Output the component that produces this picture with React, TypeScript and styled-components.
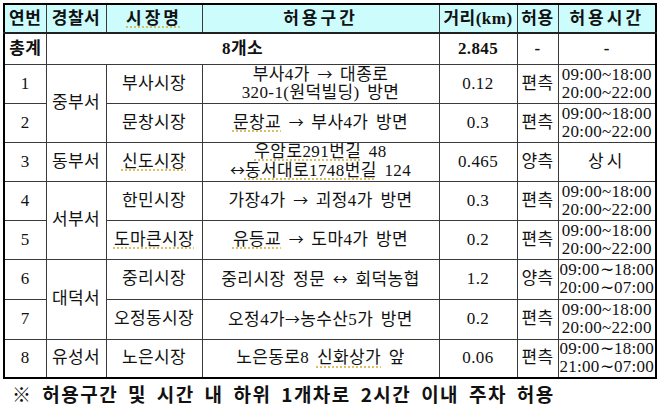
import * as React from 'react';
import styled, { createGlobalStyle } from 'styled-components';

const GlobalStyle = createGlobalStyle`
  html, body {
    margin: 0;
    padding: 0;
    background: #fff;
  }
  body {
    font-family: "Liberation Serif", "Noto Sans CJK KR", serif;
    color: #111;
  }
`;

const Page = styled.div`
  width: 658px;
  height: 406px;
  padding: 3px 3px 0 3px;
  box-sizing: border-box;
  overflow: hidden;
`;
const Table = styled.table`
  width: 652px;
  table-layout: fixed;
  border-collapse: collapse;
  border: 2px solid #000;
`;
const Col = styled.col<{ w: number }>`
  width: ${(p) => p.w}px;
`;
const Row = styled.tr<{ h: number }>`
  height: ${(p) => p.h}px;
`;
const Cell = styled.td`
  border: 1px solid #3a3a3a;
  padding: 0;
  text-align: center;
  vertical-align: middle;
  font-size: 17px;
  line-height: 18px;
  letter-spacing: 0.4px;
  word-spacing: 3px;
  white-space: nowrap;
  overflow: hidden;
`;
const HeadCell = styled(Cell).attrs({ as: 'th' })<{ wide?: boolean }>`
  background: #ccfcfc;
  font-weight: 700;
  font-size: 17px;
  letter-spacing: ${(p) => (p.wide ? '3px' : '0.5px')};
  border-bottom: 2px solid #222;
`;
const TotalCell = styled(Cell)`
  font-weight: 700;
`;
const TimeCell = styled(Cell)`
  font-size: 17px;
  letter-spacing: 0.3px;
  line-height: 18px;
`;
const TimeLine = styled.div`
  white-space: nowrap;
`;
const Always = styled.span`
  letter-spacing: 3px;
`;
const Sym = styled.span`
  font-family: "Noto Sans CJK KR", sans-serif;
  font-size: 15px;
  letter-spacing: 0;
`;
const SpellMark = styled.span`
  text-decoration: underline dotted #d9b44a;
  text-underline-offset: 3px;
`;
const Note = styled.div`
  padding: 5px 0 0 9px;
  font-family: "Noto Sans CJK KR", sans-serif;
  font-weight: 700;
  font-size: 19px;
  line-height: 20px;
  letter-spacing: 1.5px;
  word-spacing: 4px;
  white-space: nowrap;
`;

type RowData = {
    no: string;
    station?: { name: string; span: number };
    market: React.ReactNode;
    section: React.ReactNode;
    dist: string;
    side: string;
    time: React.ReactNode;
    height: number;
};

const times = (a: string, b: string) => (
    <>
        <TimeLine>{a}</TimeLine>
        <TimeLine>{b}</TimeLine>
    </>
);

const rows: RowData[] = [
    {
        no: '1',
        station: { name: '중부서', span: 2 },
        market: '부사시장',
        section: (
            <>
                <div>부사4가 <Sym>→</Sym> 대종로</div>
                <div>320-1(원덕빌딩) 방면</div>
            </>
        ),
        dist: '0.12',
        side: '편측',
        time: times('09:00~18:00', '20:00~22:00'),
        height: 39,
    },
    {
        no: '2',
        market: '문창시장',
        section: <><SpellMark>문창교</SpellMark> <Sym>→</Sym> 부사4가 방면</>,
        dist: '0.3',
        side: '편측',
        time: times('09:00~18:00', '20:00~22:00'),
        height: 39,
    },
    {
        no: '3',
        station: { name: '동부서', span: 1 },
        market: <SpellMark>신도시장</SpellMark>,
        section: (
            <>
                <div><SpellMark>우암로291번길</SpellMark> 48</div>
                <div><Sym>↔</Sym><SpellMark>동서대로1748번길</SpellMark> 124</div>
            </>
        ),
        dist: '0.465',
        side: '양측',
        time: <Always>상시</Always>,
        height: 39,
    },
    {
        no: '4',
        station: { name: '서부서', span: 2 },
        market: '한민시장',
        section: <>가장4가 <Sym>→</Sym> 괴정4가 방면</>,
        dist: '0.3',
        side: '편측',
        time: times('09:00~18:00', '20:00~22:00'),
        height: 39,
    },
    {
        no: '5',
        market: <SpellMark>도마큰시장</SpellMark>,
        section: <><SpellMark>유등교</SpellMark> <Sym>→</Sym> 도마4가 방면</>,
        dist: '0.2',
        side: '편측',
        time: times('09:00~18:00', '20:00~22:00'),
        height: 39,
    },
    {
        no: '6',
        station: { name: '대덕서', span: 2 },
        market: '중리시장',
        section: <>중리시장 정문 <Sym>↔</Sym> 회덕농협</>,
        dist: '1.2',
        side: '양측',
        time: times('09:00∼18:00', '20:00∼07:00'),
        height: 40,
    },
    {
        no: '7',
        market: '오정동시장',
        section: <>오정4가<Sym>→</Sym>농수산5가 방면</>,
        dist: '0.2',
        side: '편측',
        time: times('09:00~18:00', '20:00~22:00'),
        height: 40,
    },
    {
        no: '8',
        station: { name: '유성서', span: 1 },
        market: '노은시장',
        section: <>노은동로8 <SpellMark>신화상가</SpellMark> 앞</>,
        dist: '0.06',
        side: '편측',
        time: times('09:00∼18:00', '21:00∼07:00'),
        height: 39,
    },
];

const cols = [42, 60, 96, 237, 78, 41, 98];

const App = () => {
    return (
        <Page>
            <GlobalStyle />
            <Table>
                <colgroup>
                    {cols.map((w, i) => (
                        <Col key={i} w={w} />
                    ))}
                </colgroup>
                <thead>
                    <Row h={29}>
                        <HeadCell>연번</HeadCell>
                        <HeadCell>경찰서</HeadCell>
                        <HeadCell wide><SpellMark>시장명</SpellMark></HeadCell>
                        <HeadCell wide>허용구간</HeadCell>
                        <HeadCell>거리(km)</HeadCell>
                        <HeadCell>허용</HeadCell>
                        <HeadCell wide>허용시간</HeadCell>
                    </Row>
                </thead>
                <tbody>
                    <Row h={31}>
                        <TotalCell>총계</TotalCell>
                        <TotalCell colSpan={3}>8개소</TotalCell>
                        <TotalCell>2.845</TotalCell>
                        <TotalCell>-</TotalCell>
                        <TotalCell>-</TotalCell>
                    </Row>
                    {rows.map((r) => (
                        <Row h={r.height} key={r.no}>
                            <Cell>{r.no}</Cell>
                            {r.station && (
                                <Cell rowSpan={r.station.span}>{r.station.name}</Cell>
                            )}
                            <Cell>{r.market}</Cell>
                            <Cell>{r.section}</Cell>
                            <Cell>{r.dist}</Cell>
                            <Cell>{r.side}</Cell>
                            <TimeCell>{r.time}</TimeCell>
                        </Row>
                    ))}
                </tbody>
            </Table>
            <Note>※ 허용구간 및 시간 내 하위 1개차로 2시간 이내 주차 허용</Note>
        </Page>
    );
};

export default App;
